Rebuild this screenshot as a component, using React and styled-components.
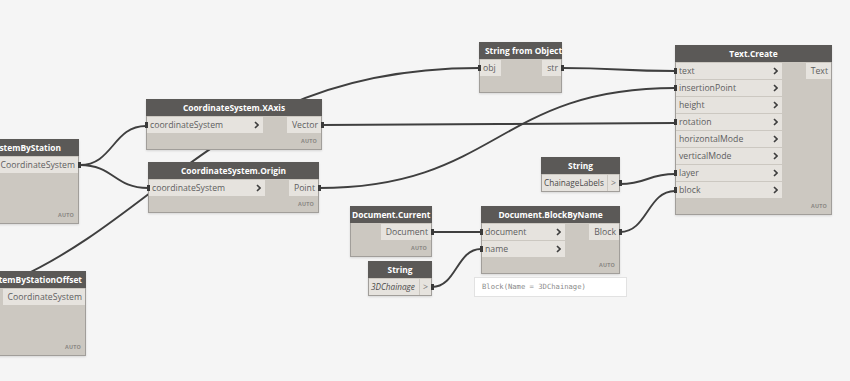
import styled, { createGlobalStyle } from 'styled-components';

const GlobalStyle = createGlobalStyle`
  html, body {
    margin: 0;
    padding: 0;
    background: #f5f5f5;
  }
  * {
    box-sizing: border-box;
  }
`;

const Canvas = styled.div`
  position: relative;
  width: 850px;
  height: 381px;
  overflow: hidden;
  background: #f5f5f5;
  font-family: 'Open Sans', 'Liberation Sans', sans-serif;
`;

const WireLayer = styled.svg`
  position: absolute;
  left: 0;
  top: 0;
  width: 850px;
  height: 381px;
`;

const NodeBox = styled.div`
  position: absolute;
  top: ${(p) => p.$y}px;
  ${(p) => (p.$right !== undefined ? `right: ${p.$right}px;` : `left: ${p.$x}px;`)}
  ${(p) => (p.$w ? `width: ${p.$w}px;` : '')}
  display: flex;
  flex-direction: column;
  background: #ccc8c1;
  border: 1px solid #a19e9a;
  box-shadow: 0 1px 2px rgba(0, 0, 0, 0.12);
`;

const Header = styled.div`
  height: 17px;
  padding: 0 ${(p) => p.$pad}px;
  margin: -1px -1px 0;
  background: #5b5957;
  color: #ffffff;
  font-weight: 700;
  font-size: 8.4px;
  line-height: 17px;
  text-align: center;
  white-space: nowrap;
`;

const Body = styled.div`
  display: flex;
  justify-content: space-between;
  align-items: flex-start;
  padding-top: 1px;
  min-height: ${(p) => p.$rows * 17 + 1}px;
`;

const Inputs = styled.div`
  display: flex;
  flex-direction: column;
  gap: 1px;
  width: ${(p) => p.$w}px;
`;

const InPort = styled.div`
  position: relative;
  display: flex;
  align-items: center;
  justify-content: space-between;
  height: 16px;
  padding: 0 4px 0 3px;
  background: #e6e3de;
  color: #5e5e5e;
  font-size: 8.7px;
  white-space: nowrap;

  ${(p) =>
    p.$connected &&
    `&::before {
      content: '';
      position: absolute;
      left: -2px;
      top: 5px;
      width: 3px;
      height: 6px;
      background: #3a3a3a;
    }`}
`;

const Outputs = styled.div`
  display: flex;
  flex-direction: column;
  align-items: flex-end;
  gap: 1px;
`;

const OutPort = styled.div`
  position: relative;
  height: 16px;
  padding: 0 3px 0 5px;
  background: #e6e3de;
  color: #5e5e5e;
  font-size: 8.7px;
  line-height: 16px;
  white-space: nowrap;

  ${(p) =>
    p.$connected &&
    `&::after {
      content: '';
      position: absolute;
      right: -3px;
      top: 5px;
      width: 3px;
      height: 6px;
      background: #3a3a3a;
    }`}
`;

const Footer = styled.div`
  height: 15px;
  padding: 0 4px;
  color: #8a8783;
  font-size: 5.4px;
  font-weight: 700;
  line-height: 15px;
  text-align: right;
  letter-spacing: 0.2px;
`;

const StringRow = styled.div`
  display: flex;
  gap: 1px;
  height: 17px;
  padding-top: 1px;
`;

const StringValue = styled.div`
  flex: 1;
  height: 16px;
  padding: 0 2px;
  background: #e6e3de;
  color: #4a4a4a;
  font-size: 8.2px;
  line-height: 16px;
  font-style: ${(p) => (p.$italic ? 'italic' : 'normal')};
  white-space: nowrap;
  overflow: hidden;
`;

const StringOut = styled(OutPort)`
  width: 11px;
  flex: none;
  padding: 0;
  text-align: center;
  color: #777;
`;

const Preview = styled.div`
  position: absolute;
  left: ${(p) => p.$x}px;
  top: ${(p) => p.$y}px;
  width: ${(p) => p.$w}px;
  height: 20px;
  padding: 0 7px;
  background: #ffffff;
  border: 1px solid #e2e2e2;
  color: #8a8a8a;
  font-family: 'DejaVu Sans Mono', 'Liberation Mono', monospace;
  font-size: 7.2px;
  line-height: 18px;
`;

function Chevron() {
  return (
    <svg width="5" height="8" viewBox="0 0 5 8">
      <path d="M1 1 L4 4 L1 7" fill="none" stroke="#3e3e3e" strokeWidth="1.6" />
    </svg>
  );
}

function Node({ x, y, right, w, title, pad = 6, inputs = [], inputW = 0, outputs = [], rows = 1, auto = true, chevrons = true }) {
  return (
    <NodeBox $x={x} $y={y} $right={right} $w={w}>
      <Header $pad={pad}>{title}</Header>
      <Body $rows={rows}>
        <Inputs $w={inputW}>
          {inputs.map((inp) => (
            <InPort key={inp.name} $connected={inp.connected}>
              {inp.name}
              {chevrons && <Chevron />}
            </InPort>
          ))}
        </Inputs>
        <Outputs>
          {outputs.map((out) => (
            <OutPort key={out.name} $connected={out.connected}>
              {out.name}
            </OutPort>
          ))}
        </Outputs>
      </Body>
      <Footer>{auto ? 'AUTO' : ''}</Footer>
    </NodeBox>
  );
}

function StringNode({ x, y, w, value, italic }) {
  return (
    <NodeBox $x={x} $y={y} $w={w}>
      <Header $pad={4}>String</Header>
      <StringRow>
        <StringValue $italic={italic}>{value}</StringValue>
        <StringOut $connected>&gt;</StringOut>
      </StringRow>
    </NodeBox>
  );
}

function wire(x0, y0, x1, y1) {
  const d = (x1 - x0) / 2;
  return `M${x0} ${y0} C${x0 + d} ${y0}, ${x1 - d} ${y1}, ${x1} ${y1}`;
}

const wires = [
  wire(80, 165, 146, 126),
  wire(80, 165, 148, 188),
  'M-179 318 C150 318, 150 68, 479 68',
  wire(322, 125, 675, 123),
  wire(319, 188, 675, 88),
  wire(562, 68, 675, 71),
  wire(620, 184, 675, 174),
  wire(620, 232, 675, 191),
  wire(432, 232, 481, 232),
  wire(432, 287, 481, 249),
];

const textInputs = [
  'text',
  'insertionPoint',
  'height',
  'rotation',
  'horizontalMode',
  'verticalMode',
  'layer',
  'block',
];

export default function App() {
  return (
    <Canvas>
      <GlobalStyle />
      <WireLayer viewBox="0 0 850 381">
        {wires.map((d, i) => (
          <path key={i} d={d} fill="none" stroke="#3f3f3f" strokeWidth="1.9" />
        ))}
      </WireLayer>

      <Node
        right={771}
        y={139}
        title="Alignment.CoordinateSystemByStation"
        pad={18}
        outputs={[{ name: 'CoordinateSystem', connected: true }]}
        rows={3}
      />
      <Node
        right={764}
        y={271}
        title="Alignment.CoordinateSystemByStationOffset"
        pad={4}
        outputs={[{ name: 'CoordinateSystem' }]}
        rows={3}
      />
      <Node
        x={146}
        y={99}
        w={176}
        title="CoordinateSystem.XAxis"
        inputW={116}
        inputs={[{ name: 'coordinateSystem', connected: true }]}
        outputs={[{ name: 'Vector', connected: true }]}
      />
      <Node
        x={148}
        y={162}
        w={171}
        title="CoordinateSystem.Origin"
        inputW={116}
        inputs={[{ name: 'coordinateSystem', connected: true }]}
        outputs={[{ name: 'Point', connected: true }]}
      />
      <Node
        x={479}
        y={42}
        w={83}
        title="String from Object"
        inputW={21}
        chevrons={false}
        inputs={[{ name: 'obj', connected: true }]}
        outputs={[{ name: 'str', connected: true }]}
        auto={false}
      />
      <Node
        x={675}
        y={45}
        w={157}
        title="Text.Create"
        inputW={106}
        inputs={textInputs.map((name) => ({
          name,
          connected: ['text', 'insertionPoint', 'rotation', 'layer', 'block'].includes(name),
        }))}
        outputs={[{ name: 'Text' }]}
        rows={8}
      />
      <StringNode x={541} y={157} w={79} value="ChainageLabels" />
      <Node
        x={350}
        y={206}
        w={82}
        title="Document.Current"
        pad={2}
        outputs={[{ name: 'Document', connected: true }]}
      />
      <Node
        x={481}
        y={206}
        w={139}
        title="Document.BlockByName"
        inputW={83}
        inputs={[
          { name: 'document', connected: true },
          { name: 'name', connected: true },
        ]}
        outputs={[{ name: 'Block', connected: true }]}
        rows={2}
      />
      <StringNode x={368} y={261} w={64} value="3DChainage" italic />
      <Preview $x={474} $y={277} $w={153}>
        Block(Name = 3DChainage)
      </Preview>
    </Canvas>
  );
}
